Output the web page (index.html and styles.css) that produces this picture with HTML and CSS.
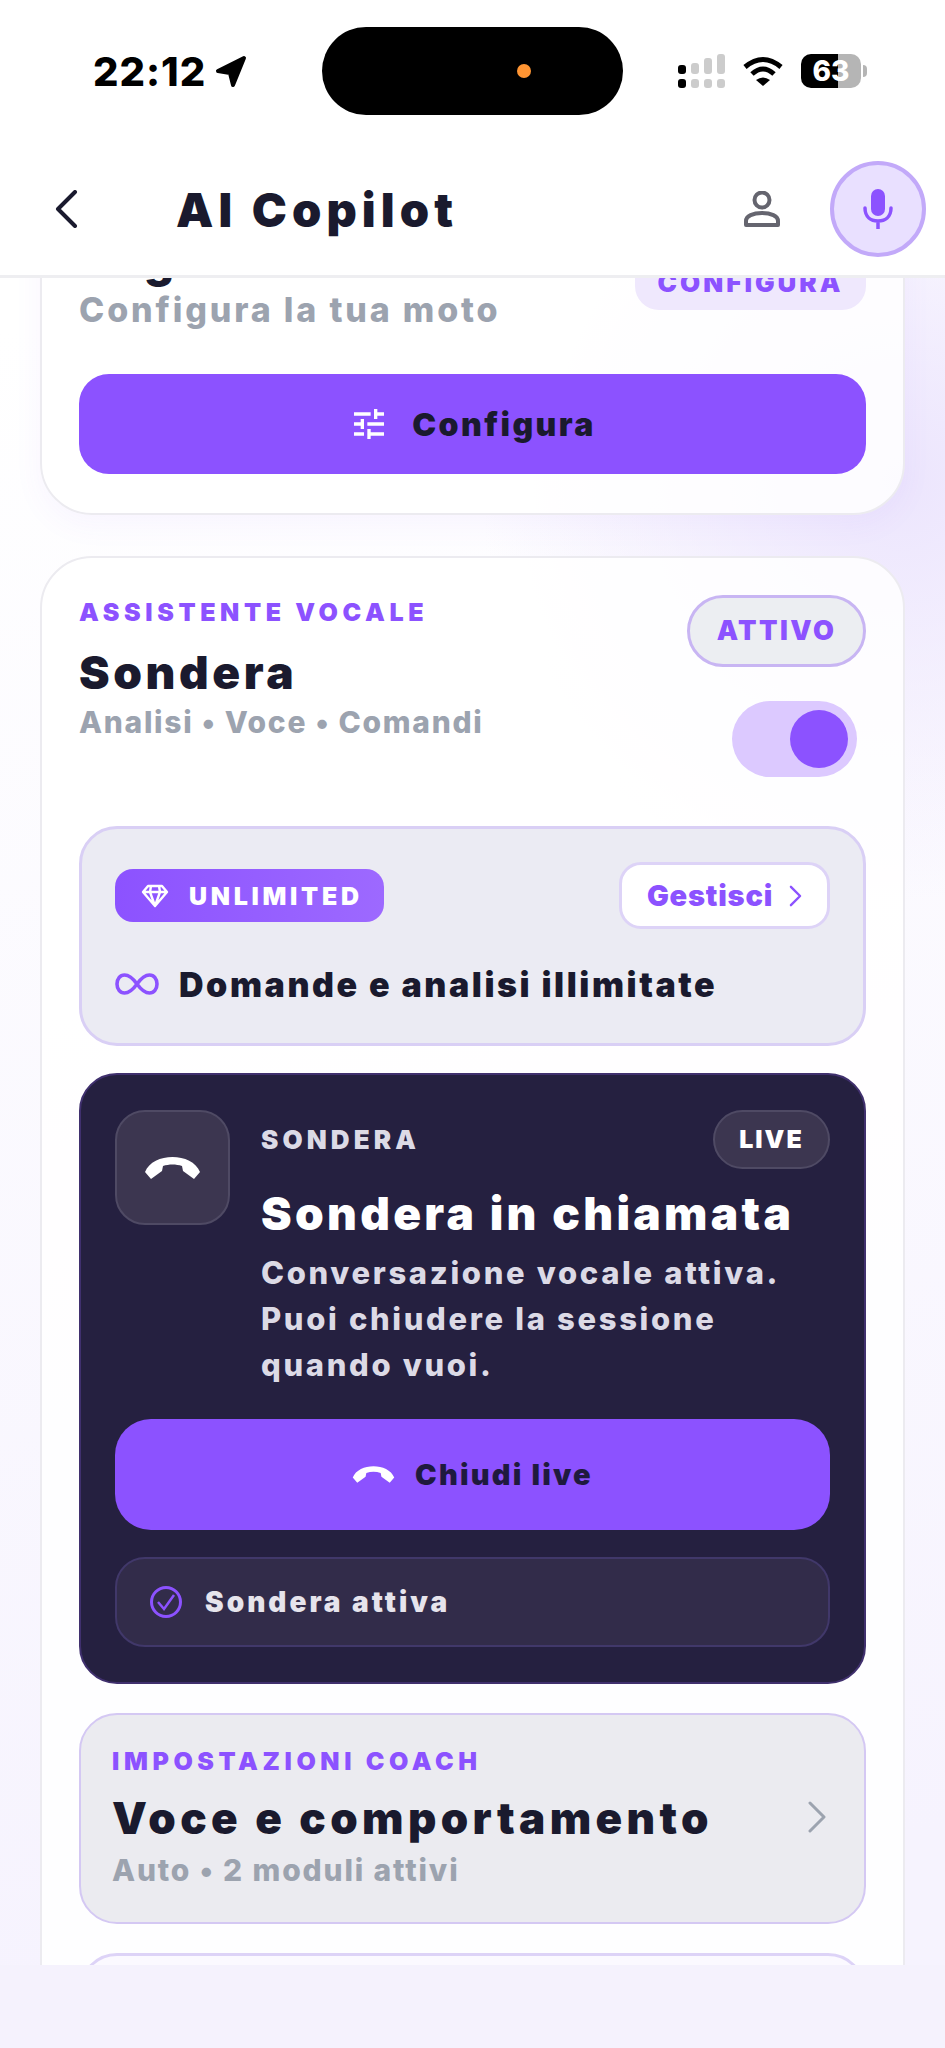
FILE: index.html
```html
<!DOCTYPE html>
<html>

<head>
    <title>AI Copilot</title>
    <link rel="stylesheet" href="styles.css">
</head>

<body>
    <div id="phone">
        <header id="topbar">
            <div class="status">
                <div class="status-left">
                    <span class="time">22:12</span>
                    <svg class="arrow" viewBox="0 0 32 33"><path d="M29 3L3 16L15 18L18 30Z" fill="#000" stroke="#000" stroke-width="4" stroke-linejoin="round"/></svg>
                </div>
                <div class="island"><span class="island-dot"></span></div>
                <div class="status-right">
                    <svg class="signal" viewBox="0 0 47 34">
                        <rect x="0" y="11" width="8" height="9" rx="3" fill="#000"/>
                        <rect x="13" y="9" width="8" height="11" rx="3" fill="#ccc"/>
                        <rect x="26" y="4" width="8" height="16" rx="3" fill="#ccc"/>
                        <rect x="39" y="0" width="8" height="20" rx="3" fill="#ccc"/>
                        <rect x="0" y="25" width="8" height="9" rx="3" fill="#000"/>
                        <rect x="13" y="25" width="8" height="9" rx="3" fill="#ccc"/>
                        <rect x="26" y="25" width="8" height="9" rx="3" fill="#ccc"/>
                        <rect x="39" y="25" width="8" height="9" rx="3" fill="#ccc"/>
                    </svg>
                    <svg class="wifi" viewBox="0 0 40 30">
                        <path d="M2 11Q20 -4 38 11" fill="none" stroke="#000" stroke-width="5"/>
                        <path d="M9 18Q20 8 31 18" fill="none" stroke="#000" stroke-width="5"/>
                        <path d="M13 24Q20 19 27 24L20 30Z" fill="#000"/>
                    </svg>
                    <div class="battery">63</div>
                    <span class="battery-tip"></span>
                </div>
            </div>
            <nav class="nav">
                <svg class="back" viewBox="0 0 24 38"><path d="M21 2L4 19L21 36" fill="none" stroke="#1a1a2e" stroke-width="4" stroke-linecap="round" stroke-linejoin="round"/></svg>
                <h1 class="nav-title">AI Copilot</h1>
                <svg class="person" viewBox="0 0 36 36">
                    <circle cx="18" cy="9" r="7.5" fill="none" stroke="#65656f" stroke-width="4"/>
                    <path d="M2 34V30C2 25 9 22 18 22S34 25 34 30V34Z" fill="none" stroke="#65656f" stroke-width="4" stroke-linejoin="round"/>
                </svg>
                <div class="mic">
                    <svg viewBox="0 0 30 40" width="30" height="40">
                        <rect x="8" y="0" width="14" height="27" rx="7" fill="#8c52ff"/>
                        <path d="M2 19C2 28 8 32 15 32S28 28 28 19M15 32V40" fill="none" stroke="#8c52ff" stroke-width="3.5" stroke-linecap="round"/>
                    </svg>
                </div>
            </nav>
        </header>

        <main id="content">
            <section class="card card-moto">
                <div class="moto-head">
                    <div>
                        <h2 class="card-title">Regolazione</h2>
                        <p class="card-sub">Configura la tua moto</p>
                    </div>
                    <span class="tag">CONFIGURA</span>
                </div>
                <button class="btn btn-configura">
                    <svg viewBox="0 0 24 24" width="40" height="40" fill="#fff"><path d="M3 17v2h6v-2H3zM3 5v2h10V5H3zm10 16v-2h8v-2h-8v-2h-2v6h2zM7 9v2H3v2h4v2h2V9H7zm14 4v-2H11v2h10zm-6-4h2V7h4V5h-4V3h-2v6z"/></svg>
                    Configura
                </button>
            </section>

            <section class="card card-voice">
                <div class="voice-head">
                    <div>
                        <p class="eyebrow">ASSISTENTE VOCALE</p>
                        <h2 class="card-title">Sondera</h2>
                        <p class="card-sub">Analisi • Voce • Comandi</p>
                    </div>
                    <div class="voice-side">
                        <span class="state">ATTIVO</span>
                        <div class="toggle"><span class="knob"></span></div>
                    </div>
                </div>

                <div class="plan">
                    <div class="plan-top">
                        <span class="plan-pill">
                            <svg viewBox="0 0 28 24" width="28" height="24"><path d="M7 2H21L26 8L14 22L2 8ZM2 8H26M9 8L14 22L19 8M10 2L9 8M18 2L19 8" fill="none" stroke="#fff" stroke-width="2.4" stroke-linejoin="round"/></svg>
                            UNLIMITED
                        </span>
                        <button class="manage">
                            Gestisci
                            <svg viewBox="0 0 14 24" width="13" height="22"><path d="M2 2L12 12L2 22" fill="none" stroke="#8c52ff" stroke-width="2.6" stroke-linecap="round" stroke-linejoin="round"/></svg>
                        </button>
                    </div>
                    <div class="plan-line">
                        <svg viewBox="0 0 44 22" width="44" height="22"><path d="M22 11C17 4 13 2 9.500 2C5 2 2 6 2 11S5 20 9.500 20C13 20 17 18 22 11S31 2 34.500 2C39 2 42 6 42 11S39 20 34.500 20C31 20 27 18 22 11Z" fill="none" stroke="#8c52ff" stroke-width="3.600"/></svg>
                        Domande e analisi illimitate
                    </div>
                </div>

                <div class="live">
                    <div class="live-top">
                        <div class="live-tile">
                            <svg viewBox="0 0 57 22" width="57" height="22"><path d="M1 15C9 -5 48 -5 56 15L50 22L39 14L38 9C32 7 25 7 19 9L18 14L7 22Z" fill="#fff"/></svg>
                        </div>
                        <div class="live-info">
                            <div class="live-row">
                                <span class="live-label">SONDERA</span>
                                <span class="live-pill">LIVE</span>
                            </div>
                            <h3 class="live-title">Sondera in chiamata</h3>
                            <p class="live-desc">Conversazione vocale attiva.<br>Puoi chiudere la sessione<br>quando vuoi.</p>
                        </div>
                    </div>
                    <button class="btn btn-close">
                        <svg viewBox="0 0 57 22" width="43" height="17"><path d="M1 15C9 -5 48 -5 56 15L50 22L39 14L38 9C32 7 25 7 19 9L18 14L7 22Z" fill="#fff"/></svg>
                        Chiudi live
                    </button>
                    <div class="live-status">
                        <svg viewBox="0 0 32 32" width="32" height="32"><circle cx="16" cy="16" r="14.500" fill="none" stroke="#8c52ff" stroke-width="3"/><path d="M8 16L14 23L24 9" fill="none" stroke="#8c52ff" stroke-width="2.500"/></svg>
                        Sondera attiva
                    </div>
                </div>

                <div class="coach">
                    <div>
                        <p class="eyebrow">IMPOSTAZIONI COACH</p>
                        <h3 class="coach-title">Voce e comportamento</h3>
                        <p class="card-sub">Auto • 2 moduli attivi</p>
                    </div>
                    <svg viewBox="0 0 18 32" width="18" height="32"><path d="M2 2L16 16L2 30" fill="none" stroke="#9ca3af" stroke-width="3" stroke-linecap="round" stroke-linejoin="round"/></svg>
                </div>

                <div class="next-box"></div>
            </section>
        </main>

        <div id="bottom"></div>
    </div>
</body>

</html>
```

FILE: styles.css
```css
* {
    box-sizing: border-box;
}

body {
    margin: 0;
    font-family: Inter, "Noto Sans", sans-serif;
    color: #1a1a2e;
}

h1, h2, h3, p {
    margin: 0;
}

#phone {
    width: 945px;
    height: 2048px;
    display: flex;
    flex-direction: column;
    overflow: hidden;
    background:
        radial-gradient(circle at 900px 480px, #ece5fd 0, rgba(236, 229, 253, 0) 420px),
        linear-gradient(170deg, #ffffff 15%, #f6f3fe 90%);
}

/* top bar */
#topbar {
    height: 278px;
    flex: none;
    background: #fff;
    border-bottom: 3px solid #eeeef1;
}

.status {
    display: flex;
    align-items: center;
    height: 88px;
    margin-top: 27px;
    padding-left: 93px;
}

.status-left {
    display: flex;
    align-items: center;
    gap: 9px;
    width: 229px;
}

.time {
    font-size: 40px;
    font-weight: 800;
    letter-spacing: 1px;
    color: #000;
}

.arrow {
    width: 32px;
    height: 33px;
}

.island {
    width: 301px;
    height: 88px;
    background: #000;
    border-radius: 44px;
    display: flex;
    align-items: center;
    padding-left: 195px;
}

.island-dot {
    width: 14px;
    height: 14px;
    border-radius: 50%;
    background: #ff9533;
}

.status-right {
    display: flex;
    align-items: center;
    margin-left: 55px;
}

.signal {
    width: 47px;
    height: 34px;
}

.wifi {
    width: 40px;
    height: 30px;
    margin-left: 18px;
}

.battery {
    width: 60px;
    height: 34px;
    margin-left: 18px;
    border-radius: 10px;
    background: linear-gradient(90deg, #000 62%, #b5b5b5 62%);
    color: #fff;
    font-size: 28px;
    font-weight: 800;
    line-height: 34px;
    text-align: center;
}

.battery-tip {
    width: 4px;
    height: 12px;
    margin-left: 2px;
    border-radius: 0 4px 4px 0;
    background: #b5b5b5;
}

.nav {
    display: flex;
    align-items: center;
    height: 96px;
    margin-top: 46px;
    padding: 0 19px 0 54px;
}

.back {
    width: 24px;
    height: 38px;
}

.nav-title {
    flex: 1;
    font-size: 47px;
    font-weight: 900;
    letter-spacing: 5.100px;
    margin-left: 98px;
}

.person {
    width: 36px;
    height: 36px;
}

.mic {
    width: 96px;
    height: 96px;
    margin-left: 50px;
    border-radius: 50%;
    background: #e9e0ff;
    border: 4px solid #c2a9f9;
    display: flex;
    align-items: center;
    justify-content: center;
}

/* scrolling part */
#content {
    flex: 1;
    overflow: hidden;
    padding: 0 40px;
}

#bottom {
    height: 83px;
    flex: none;
    background: #f5f2fd;
}

.card {
    background: rgba(255, 255, 255, 0.85);
    border: 2px solid #ecebf0;
    border-radius: 52px;
    padding: 37px;
}

.card-moto {
    margin-top: -100px;
    padding-bottom: 39px;
    box-shadow: 0 10px 30px rgba(140, 82, 255, 0.05);
}

.moto-head {
    display: flex;
    justify-content: space-between;
}

.card-title {
    font-size: 46px;
    font-weight: 900;
    letter-spacing: 3.600px;
    line-height: 56px;
    margin-top: 15px;
}

.card-sub {
    font-size: 30px;
    font-weight: 800;
    color: #9ca3af;
    letter-spacing: 1.700px;
    line-height: 38px;
    margin-top: 3px;
}

.card-moto .card-sub {
    font-size: 34px;
    letter-spacing: 2.850px;
}

.tag {
    width: 231px;
    height: 93px;
    background: #efe8fd;
    border-radius: 24px;
    color: #8c52ff;
    font-size: 26px;
    font-weight: 900;
    letter-spacing: 3px;
    line-height: 31px;
    text-align: center;
    padding-top: 50px;
}

.btn {
    display: flex;
    align-items: center;
    justify-content: center;
    width: 100%;
    border: none;
    background: #8c52ff;
    font-family: inherit;
    font-weight: 900;
    color: #1a1a2e;
}

.btn-configura {
    height: 100px;
    margin-top: 45px;
    gap: 23px;
    font-size: 32px;
    letter-spacing: 2.400px;
    border-radius: 30px;
}

.card-voice {
    margin-top: 41px;
    padding-bottom: 60px;
}

.voice-head {
    display: flex;
    justify-content: space-between;
}

.eyebrow {
    font-size: 25px;
    font-weight: 900;
    letter-spacing: 4.600px;
    line-height: 34px;
    color: #8c52ff;
}

.voice-side {
    display: flex;
    flex-direction: column;
    align-items: flex-end;
    gap: 34px;
}

.state {
    width: 179px;
    height: 72px;
    border-radius: 36px;
    background: #eceef2;
    border: 3px solid #c8b5f3;
    color: #8c52ff;
    font-size: 27px;
    font-weight: 900;
    letter-spacing: 2.400px;
    line-height: 66px;
    text-align: center;
}

.toggle {
    width: 125px;
    height: 76px;
    margin-right: 9px;
    border-radius: 38px;
    background: #dcc9ff;
    display: flex;
    align-items: center;
    justify-content: flex-end;
    padding-right: 9px;
}

.knob {
    width: 58px;
    height: 58px;
    border-radius: 50%;
    background: #8c52ff;
}

.plan {
    margin-top: 49px;
    background: #ebebf3;
    border: 3px solid #d9cff5;
    border-radius: 38px;
    padding: 33px 33px 37px;
}

.plan-top {
    display: flex;
    align-items: center;
    justify-content: space-between;
}

.plan-pill {
    display: flex;
    align-items: center;
    gap: 20px;
    width: 269px;
    height: 53px;
    padding-left: 26px;
    border-radius: 18px;
    background: linear-gradient(90deg, #8c52ff, #9d69ff);
    color: #fff;
    font-size: 25px;
    font-weight: 900;
    letter-spacing: 3.700px;
}

.manage {
    display: flex;
    align-items: center;
    justify-content: center;
    gap: 16px;
    width: 211px;
    height: 67px;
    background: #fff;
    border: 3px solid #ddd3f7;
    border-radius: 22px;
    color: #8c52ff;
    font-family: inherit;
    font-size: 29px;
    font-weight: 900;
    letter-spacing: 0.800px;
}

.plan-line {
    display: flex;
    align-items: center;
    gap: 20px;
    height: 44px;
    margin-top: 33px;
    font-size: 34px;
    font-weight: 900;
    letter-spacing: 2.550px;
}

.live {
    margin-top: 27px;
    background: #252040;
    border: 2px solid #40306e;
    border-radius: 38px;
    padding: 35px 34px 35px;
}

.live-top {
    display: flex;
    gap: 31px;
}

.live-tile {
    width: 115px;
    height: 115px;
    flex: none;
    border-radius: 30px;
    background: #3c3650;
    border: 2px solid #4f4a64;
    display: flex;
    align-items: center;
    justify-content: center;
}

.live-info {
    flex: 1;
}

.live-row {
    display: flex;
    align-items: center;
    justify-content: space-between;
}

.live-label {
    font-size: 26px;
    font-weight: 900;
    letter-spacing: 4.100px;
    color: #dcdae6;
}

.live-pill {
    width: 117px;
    height: 59px;
    border-radius: 30px;
    background: #3c3650;
    border: 2px solid #4f4a64;
    color: #fff;
    font-size: 25px;
    font-weight: 900;
    letter-spacing: 2px;
    line-height: 55px;
    text-align: center;
}

.live-title {
    font-size: 46px;
    font-weight: 900;
    letter-spacing: 3.300px;
    line-height: 56px;
    margin-top: 16px;
    color: #fff;
}

.live-desc {
    font-size: 31px;
    font-weight: 800;
    letter-spacing: 2.650px;
    line-height: 46px;
    margin-top: 9px;
    color: #dcdae6;
}

.btn-close {
    height: 111px;
    margin-top: 31px;
    gap: 20px;
    font-size: 29px;
    letter-spacing: 2.200px;
    border-radius: 36px;
    color: #1f1a3e;
}

.live-status {
    display: flex;
    align-items: center;
    gap: 23px;
    height: 90px;
    margin-top: 27px;
    padding-left: 33px;
    background: #322c4a;
    border: 2px solid #41386a;
    border-radius: 30px;
    color: #e6e4ec;
    font-size: 28px;
    font-weight: 900;
    letter-spacing: 3px;
}

.coach {
    display: flex;
    align-items: center;
    justify-content: space-between;
    margin-top: 29px;
    background: #ebebf0;
    border: 2px solid #d4c8f3;
    border-radius: 38px;
    padding: 29px 38px 33px 31px;
}

.coach-title {
    font-size: 44px;
    font-weight: 900;
    letter-spacing: 4.350px;
    line-height: 52px;
    margin-top: 14px;
}

.coach .card-sub {
    margin-top: 7px;
    letter-spacing: 1.850px;
}

.next-box {
    height: 120px;
    margin-top: 29px;
    background: #fbf9ff;
    border: 3px solid #ddd3f7;
    border-radius: 38px;
}
```
